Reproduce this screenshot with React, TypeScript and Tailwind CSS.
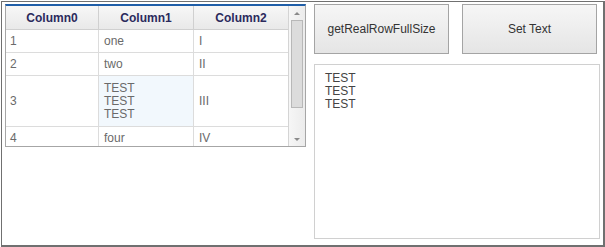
type Row = { c0: string; c1: string[]; c2: string; h: string; hl?: boolean };

const rows: Row[] = [
  { c0: "1", c1: ["one"], c2: "I", h: "h-[23px]" },
  { c0: "2", c1: ["two"], c2: "II", h: "h-[23px]" },
  { c0: "3", c1: ["TEST", "TEST", "TEST"], c2: "III", h: "h-[51px]", hl: true },
  { c0: "4", c1: ["four"], c2: "IV", h: "h-[23px]" },
];

const Grid = () => {
  return (
    <div className="ml-px w-[301px] h-[143px] border border-t-2 border-[#a6a6a6] border-t-[#1f5ea8] flex overflow-hidden">
      <div className="w-[282px] flex flex-col">
        <div className="flex h-[24px] shrink-0 bg-gradient-to-b from-[#f7f7f7] to-[#e9e9e9] border-b border-[#d0d0d0] font-bold text-[#2b2a5c]">
          <div className="w-[93px] flex items-center justify-center border-r border-[#d0d0d0]">Column0</div>
          <div className="w-[95px] flex items-center justify-center border-r border-[#d0d0d0]">Column1</div>
          <div className="w-[94px] flex items-center justify-center">Column2</div>
        </div>
        {rows.map((r, i) => (
          <div key={i} className={`flex shrink-0 ${r.h} border-b border-[#dcdcdc] text-[#6a6a6a]`}>
            <div className="w-[93px] flex items-center pl-[4px] border-r border-[#dcdcdc]">{r.c0}</div>
            <div className={`w-[95px] flex flex-col justify-center pl-[5px] border-r border-[#dcdcdc] leading-[13px] ${r.hl ? "bg-[#f2f8fd]" : ""}`}>
              {r.c1.map((t, j) => (
                <span key={j}>{t}</span>
              ))}
            </div>
            <div className="w-[94px] flex items-center pl-[5px]">{r.c2}</div>
          </div>
        ))}
      </div>
      <div className="w-[17px] border-l border-[#d4d4d4] bg-gradient-to-r from-[#f6f6f6] to-[#ececec] flex flex-col items-center">
        <div className="h-[14px] flex items-center justify-center">
          <div className="w-0 h-0 border-l-[3px] border-r-[3px] border-b-[3px] border-l-transparent border-r-transparent border-b-[#8a8a8a]" />
        </div>
        <div className="w-[12px] h-[88px] bg-[#dcdcdc] border border-[#b8b8b8]" />
        <div className="flex-1" />
        <div className="h-[14px] flex items-center justify-center">
          <div className="w-0 h-0 border-l-[3px] border-r-[3px] border-t-[3px] border-l-transparent border-r-transparent border-t-[#8a8a8a]" />
        </div>
      </div>
    </div>
  );
};

const Btn = ({ label }: { label: string }) => (
  <button className="w-[135px] h-[50px] border border-[#a4a4a4] bg-gradient-to-b from-[#f6f6f6] to-[#e5e5e5] text-[#333] text-[12px]">
    {label}
  </button>
);

export default function App() {
  return (
    <div
      className="ml-px mt-px w-[604px] h-[246px] border-2 border-[#707070] border-t border-l bg-white text-[12px] flex"
      style={{ fontFamily: '"Liberation Sans", Arial, sans-serif' }}
    >
      <div className="pt-[2px] pl-[2px]">
        <Grid />
      </div>
      <div className="ml-[8px] pt-[2px] flex flex-col">
        <div className="flex gap-[13px]">
          <Btn label="getRealRowFullSize" />
          <Btn label="Set Text" />
        </div>
        <div className="mt-[10px] w-[286px] h-[175px] border border-[#d0d0d0] pl-[10px] pt-[7px] text-[#444] leading-[13px] flex flex-col">
          <span>TEST</span>
          <span>TEST</span>
          <span>TEST</span>
        </div>
      </div>
    </div>
  );
}
